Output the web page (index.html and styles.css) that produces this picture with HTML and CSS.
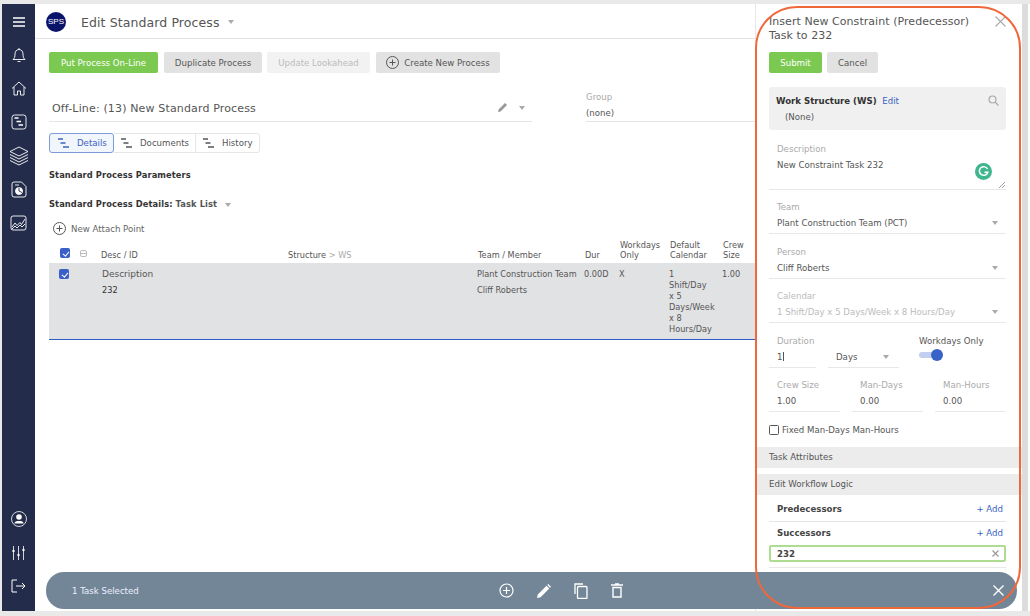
FILE: index.html
```html
<!DOCTYPE html>
<html lang="en">

<head>
    <meta charset="UTF-8">
    <meta name="viewport" content="width=device-width, initial-scale=1.0">
    <title>Edit Standard Process</title>
    <link rel="stylesheet" href="styles.css">
</head>

<body>
    <div class="app">
        <nav class="side">
            <div class="side-group">
                <span class="side-icon"><svg width="14" height="12" viewBox="0 0 14 12"><path d="M1 2h12M1 6h12M1 10h12" stroke="#fff" stroke-width="1.5"/></svg></span>
                <span class="side-icon"><svg width="14" height="16" viewBox="0 0 14 16" fill="none" stroke="#fff" stroke-width=".9"><path d="M1 12.5h12c-1.500-1.500-2-2.500-2-5.500 0-2.500-1.500-4.500-4-4.500S3 4.500 3 7c0 3-.5 4-2 5.500zM7 1v1.500M5.500 14.500h3"/></svg></span>
                <span class="side-icon"><svg width="16" height="15" viewBox="0 0 16 15" fill="none" stroke="#fff" stroke-width=".9"><path d="M1 7.500L8 1l7 6.500M3 6v8h3.500v-4h3v4H13V6"/></svg></span>
                <span class="side-icon"><svg width="16" height="16" viewBox="0 0 16 16" fill="none" stroke="#fff" stroke-width=".9"><rect x="1" y="1" width="14" height="14" rx="2.500"/><path d="M3.500 4h4M5.500 7.500h4.500M7.500 11h4.500" stroke-width="1.300"/></svg></span>
                <span class="side-icon"><svg width="20" height="20" viewBox="0 0 20 20" fill="none" stroke="#fff" stroke-width=".9"><path d="M10 1l9 4.500-9 4.500-9-4.500zM1 8.500l9 4.500 9-4.500M1 11.500l9 4.500 9-4.500M1 14.500l9 4.500 9-4.500"/></svg></span>
                <span class="side-icon"><svg width="16" height="17" viewBox="0 0 16 17" fill="none" stroke="#fff" stroke-width=".9"><path d="M3 1h7.500L15 5.500V14a2 2 0 0 1-2 2H3a2 2 0 0 1-2-2V3a2 2 0 0 1 2-2z"/><path d="M4 4h4"/><circle cx="8" cy="10" r="3.500" fill="#fff"/><path d="M8 10V6.500M8 10l3 1.500" stroke="#232d4b"/></svg></span>
                <span class="side-icon"><svg width="17" height="16" viewBox="0 0 17 16" fill="none" stroke="#fff" stroke-width=".9"><rect x="1" y="1" width="15" height="14" rx="2"/><path d="M2 12l3-4 2 2.500 3-3 1.500 2L15 4"/><path d="M2 14l3-3 2 2 3-3 2 2 3-3"/></svg></span>
            </div>
            <div class="side-group">
                <span class="side-icon"><svg width="16" height="16" viewBox="0 0 16 16"><circle cx="8" cy="8" r="7.500" fill="none" stroke="#fff" stroke-width=".8"/><circle cx="8" cy="6" r="2.800" fill="#fff"/><path d="M3.500 12.500c0-2 2-2.500 4.500-2.500s4.500.5 4.500 2.500z" fill="#fff"/></svg></span>
                <span class="side-icon"><svg width="15" height="14" viewBox="0 0 15 14" stroke="#fff" fill="#fff"><path d="M2.500 0v14M7.500 0v14M12.500 0v14" stroke-width=".8"/><circle cx="2.500" cy="5" r="1.200" stroke="none"/><circle cx="7.500" cy="9" r="1.200" stroke="none"/><circle cx="12.500" cy="4" r="1.200" stroke="none"/></svg></span>
                <span class="side-icon"><svg width="15" height="14" viewBox="0 0 15 14" fill="none" stroke="#fff" stroke-width="1"><path d="M6 1H1v12h5M5 7h9M11 4l3 3-3 3"/></svg></span>
            </div>
        </nav>

        <main class="main">
            <header class="top">
                <span class="logo">SPS</span>
                <h1 class="title">Edit Standard Process</h1>
                <i class="caret"></i>
            </header>

            <div class="content">
                <div class="actions">
                    <button class="btn green wide">Put Process On-Line</button>
                    <button class="btn gray dup">Duplicate Process</button>
                    <button class="btn off look">Update Lookahead</button>
                    <button class="btn gray create">
                        <svg width="13" height="13" viewBox="0 0 13 13" fill="none" stroke="#555"><circle cx="6.500" cy="6.500" r="6"/><path d="M6.500 3.500v6M3.500 6.500h6"/></svg>
                        Create New Process
                    </button>
                </div>

                <div class="proc-row">
                    <div class="proc-name">
                        <span>Off-Line: (13) New Standard Process</span>
                        <svg class="pencil" width="10" height="10" viewBox="0 0 10 10"><path d="M0 10l.6-2.600L7 1l2 2-6.400 6.400z" fill="#999"/></svg>
                        <i class="caret"></i>
                    </div>
                    <div class="group">
                        <label>Group</label>
                        <span>(none)</span>
                    </div>
                </div>

                <div class="tabs">
                    <span class="tab active"><svg class="gantt" width="11" height="10" viewBox="0 0 11 10"><path d="M0 1h5M2.500 5h5M5 9h6" stroke="currentColor" stroke-width="1.500"/></svg>Details</span>
                    <span class="tab doc"><svg class="gantt" width="11" height="10" viewBox="0 0 11 10"><path d="M0 1h5M2.500 5h5M5 9h6" stroke="currentColor" stroke-width="1.500"/></svg>Documents</span>
                    <span class="tab hist"><svg class="gantt" width="11" height="10" viewBox="0 0 11 10"><path d="M0 1h5M2.500 5h5M5 9h6" stroke="currentColor" stroke-width="1.500"/></svg>History</span>
                </div>

                <h2 class="section params">Standard Process Parameters</h2>
                <h2 class="section details">Standard Process Details: <span class="sub">Task List</span> <i class="caret"></i></h2>

                <div class="attach">
                    <svg width="13" height="13" viewBox="0 0 13 13" fill="none" stroke="#555"><circle cx="6.500" cy="6.500" r="6"/><path d="M6.500 3.500v6M3.500 6.500h6"/></svg>
                    New Attach Point
                </div>
            </div>

            <table class="tasks">
                <colgroup>
                    <col class="c-check"><col class="c-tree"><col class="c-desc"><col class="c-struct"><col class="c-team"><col class="c-dur"><col class="c-work"><col class="c-cal"><col class="c-crew">
                </colgroup>
                <thead>
                    <tr>
                        <th><span class="check on"></span></th>
                        <th><span class="minus"></span></th>
                        <th>Desc / ID</th>
                        <th>Structure <span class="light">&gt; WS</span></th>
                        <th>Team / Member</th>
                        <th>Dur</th>
                        <th>Workdays Only</th>
                        <th>Default Calendar</th>
                        <th>Crew Size</th>
                    </tr>
                </thead>
                <tbody>
                    <tr>
                        <td><span class="check on"></span></td>
                        <td></td>
                        <td class="desc-cell"><div class="desc">Description</div><div class="sub-line dark">232</div></td>
                        <td></td>
                        <td><div>Plant Construction Team</div><div class="sub-line">Cliff Roberts</div></td>
                        <td>0.00D</td>
                        <td>X</td>
                        <td class="cal-cell">1 Shift/Day x 5 Days/Week x 8 Hours/Day</td>
                        <td>1.00</td>
                    </tr>
                </tbody>
            </table>
        </main>

        <aside class="panel">
            <h2 class="panel-title">Insert New Constraint (Predecessor) Task to 232</h2>
            <svg class="panel-close" width="11" height="11" viewBox="0 0 11 11"><path d="M.5.5l10 10M10.500.5l-10 10" stroke="#aaa" stroke-width="1.100"/></svg>

            <div class="panel-btns">
                <button class="btn green submit">Submit</button>
                <button class="btn gray cancel">Cancel</button>
            </div>

            <div class="ws">
                <div><b>Work Structure (WS)</b> <a class="link">Edit</a></div>
                <div class="ws-val">(None)</div>
                <svg class="ws-search" width="11" height="11" viewBox="0 0 11 11" fill="none" stroke="#aaa" stroke-width="1.200"><circle cx="4.500" cy="4.500" r="3.500"/><path d="M7 7l3.500 3.500"/></svg>
            </div>

            <div class="field area">
                <label>Description</label>
                <div class="val">New Constraint Task 232</div>
                <span class="grammarly"><svg width="11" height="11" viewBox="0 0 11 11" fill="none" stroke="#fff" stroke-width="1.500"><path d="M9.500 3A4.300 4.300 0 1 0 9.800 6.200H6.500"/></svg></span>
                <svg class="grip" width="6" height="6" viewBox="0 0 6 6"><path d="M0 6l6-6M3 6l3-3" stroke="#888" stroke-width=".8"/></svg>
            </div>

            <div class="field">
                <label>Team</label>
                <div class="val">Plant Construction Team (PCT)<i class="caret"></i></div>
            </div>
            <div class="field">
                <label>Person</label>
                <div class="val">Cliff Roberts<i class="caret"></i></div>
            </div>
            <div class="field disabled">
                <label>Calendar</label>
                <div class="val">1 Shift/Day x 5 Days/Week x 8 Hours/Day<i class="caret"></i></div>
            </div>

            <div class="cols dur-row">
                <div class="field dur">
                    <label>Duration</label>
                    <div class="val">1<span class="cursor"></span></div>
                </div>
                <div class="field unit">
                    <label>&nbsp;</label>
                    <div class="val">Days<i class="caret"></i></div>
                </div>
                <div class="workdays">
                    <span>Workdays Only</span>
                    <span class="toggle"><i></i></span>
                </div>
            </div>

            <div class="cols three">
                <div class="field"><label>Crew Size</label><div class="val">1.00</div></div>
                <div class="field"><label>Man-Days</label><div class="val">0.00</div></div>
                <div class="field"><label>Man-Hours</label><div class="val">0.00</div></div>
            </div>

            <div class="fixed"><span class="check"></span>Fixed Man-Days Man-Hours</div>

            <div class="band first">Task Attributes</div>
            <div class="band">Edit Workflow Logic</div>

            <div class="logic line"><b>Predecessors</b><a class="link">+ Add</a></div>
            <div class="logic"><b>Successors</b><a class="link">+ Add</a></div>
            <div class="tag"><b>232</b><svg width="7" height="7" viewBox="0 0 7 7"><path d="M.5.5l6 6M6.500.5l-6 6" stroke="#999" stroke-width="1.200"/></svg></div>
            <div class="tag-line"></div>
        </aside>

        <div class="scroll"></div>

        <div class="selbar">
            <span class="sel-text">1 Task Selected</span>
            <div class="sel-icons">
                <svg width="15" height="15" viewBox="0 0 15 15" fill="none" stroke="#fff" stroke-width="1.200"><circle cx="7.500" cy="7.500" r="6.500"/><path d="M7.500 4v7M4 7.500h7"/></svg>
                <svg width="14" height="14" viewBox="0 0 14 14"><path d="M0 14l.8-3.600L9.500 1.700l2.800 2.800L3.600 13.200zM10.300 1l1-1L14 2.700l-1 1z" fill="#fff"/></svg>
                <svg width="14" height="16" viewBox="0 0 14 16" fill="none" stroke="#fff" stroke-width="1.300"><path d="M1 11V1h8"/><rect x="3.500" y="3.500" width="9.500" height="12" rx="1"/></svg>
                <svg width="12" height="15" viewBox="0 0 12 15" fill="none" stroke="#fff" stroke-width="1.400"><path d="M4 1h4M0 2h12" stroke-width="1.300"/><path d="M2 4.500h8v9.500H2z"/></svg>
            </div>
            <svg class="sel-close" width="11" height="11" viewBox="0 0 11 11"><path d="M.5.5l10 10M10.500.5l-10 10" stroke="#fff" stroke-width="1.400"/></svg>
        </div>

        <div class="ring"></div>
    </div>
</body>

</html>
```

FILE: styles.css
```css
* {
    margin: 0;
    padding: 0;
    box-sizing: border-box;
}

html,
body {
    height: 100%;
    overflow: hidden;
}

body {
    background-color: #e9e9e9;
    font-family: "DejaVu Sans", Verdana, sans-serif;
    font-size: 8.600px;
    color: #555;
    padding: 4px 0 5px 2px;
}

.app {
    display: flex;
    position: relative;
    height: 607px;
    background-color: #fff;
}

button {
    font-family: inherit;
    border: 0;
}

/* left nav */
.side {
    width: 33px;
    flex: none;
    background-color: #232d4b;
    display: flex;
    flex-direction: column;
    justify-content: space-between;
    padding: 0 0 8px;
}

.side-icon {
    display: flex;
    align-items: center;
    justify-content: center;
    height: 33.5px;
}

.side-group:first-child {
    padding-top: 1px;
}

/* main column */
.main {
    width: 720px;
    flex: none;
}

.top {
    height: 35px;
    border-bottom: 1px solid #e3e3e3;
    display: flex;
    align-items: center;
    padding: 2px 0 0 11px;
}

.logo {
    width: 20px;
    height: 20px;
    border-radius: 50%;
    background-color: #0a1468;
    color: #fff;
    font-family: "Liberation Sans", Arial, sans-serif;
    font-size: 8px;
    line-height: 20px;
    text-align: center;
}

.title {
    font-size: 12.500px;
    font-weight: normal;
    color: #555;
    margin-left: 15px;
    letter-spacing: .1px;
}

.caret {
    display: inline-block;
    width: 0;
    height: 0;
    border-left: 3.500px solid transparent;
    border-right: 3.500px solid transparent;
    border-top: 4px solid #aaa;
}

.top .caret {
    margin-left: 8px;
}

.content {
    padding: 13px 0 0 14px;
}

.actions {
    display: flex;
    height: 21px;
}

.btn {
    height: 21px;
    font-size: 8.600px;
    border-radius: 2px;
    display: inline-flex;
    align-items: center;
    justify-content: center;
    gap: 5px;
}

.green {
    background-color: #7bc950;
    color: #fff;
}

.gray {
    background-color: #e2e2e2;
    color: #555;
}

.off {
    background-color: #f2f2f2;
    color: #bbb;
}

.wide {
    width: 109px;
}

.dup {
    width: 98px;
    margin-left: 6px;
}

.look {
    width: 103px;
    margin-left: 5px;
}

.create {
    width: 124px;
    margin-left: 6px;
}

.proc-row {
    display: flex;
    height: 46px;
    margin-top: 14px;
}

.proc-name {
    width: 483px;
    height: 35px;
    border-bottom: 1px solid #e5e5e5;
    display: flex;
    align-items: flex-end;
    padding: 0 7px 6px 3px;
    font-size: 11px;
    color: #555;
    letter-spacing: .15px;
}

.proc-name span {
    flex: 1;
}

.pencil {
    margin: 0 11px 3px 0;
}

.proc-name .caret {
    margin-bottom: 5px;
}

.group {
    width: 169px;
    height: 35px;
    margin-left: 54px;
    border-bottom: 1px solid #e5e5e5;
    display: flex;
    flex-direction: column;
    gap: 6px;
    padding-top: 5px;
}

.group label {
    color: #aaa;
}

.tabs {
    display: flex;
    height: 20px;
}

.tab {
    display: flex;
    align-items: center;
    gap: 8px;
    padding-left: 7px;
    border: 1px solid #e6e6e6;
    border-left-width: 0;
    color: #555;
}

.tab.doc {
    width: 82px;
}

.tab.hist {
    width: 64px;
}

.tab:last-child {
    border-radius: 0 3px 3px 0;
}

.tab.active {
    color: #3a63c0;
    background-color: #f1f5fc;
    border: 1px solid #7c9bd8;
    border-radius: 3px;
    width: 65px;
    padding-left: 8px;
}

.gantt {
    flex: none;
}

.section {
    font-size: 8.300px;
    line-height: 10px;
    font-weight: bold;
    color: #333;
    letter-spacing: .1px;
}

.params {
    margin-top: 17px;
}

.details {
    margin-top: 19px;
}

.details .sub {
    color: #555;
}

.details .caret {
    margin-left: 5px;
}

.attach {
    display: flex;
    align-items: center;
    gap: 5px;
    margin: 13px 0 0 4px;
    height: 13px;
    color: #666;
}

/* task table */
.tasks {
    width: 706px;
    margin-left: 14px;
    table-layout: fixed;
    border-collapse: collapse;
    font-size: 8.200px;
}

.c-check {
    width: 26px;
}

.c-tree {
    width: 21px;
}

.c-desc {
    width: 187px;
}

.c-struct {
    width: 190px;
}

.c-team {
    width: 107px;
}

.c-dur {
    width: 35px;
}

.c-work {
    width: 50px;
}

.c-cal {
    width: 53px;
}

.c-crew {
    width: 37px;
}

.tasks th {
    font-weight: normal;
    text-align: left;
    vertical-align: bottom;
    line-height: 10px;
    padding: 5px 0 3px 5px;
    color: #555;
}

.tasks td {
    vertical-align: top;
    background-color: #e1e2e4;
    line-height: 11px;
    padding: 6px 0 0 4px;
    height: 76px;
    border-bottom: 1px solid #2f5bc4;
    color: #555;
}

.tasks td.desc-cell {
    padding-left: 6px;
}

.tasks td.cal-cell {
    padding-right: 7px;
}

.light {
    color: #aaa;
}

.check {
    display: inline-block;
    width: 10px;
    height: 10px;
    border: 1px solid #555;
    border-radius: 1.500px;
    background-color: #fff;
    position: relative;
}

.check.on {
    background-color: #3a5fc8;
    border-color: #3a5fc8;
}

.check.on::after {
    content: "";
    position: absolute;
    left: 2.500px;
    top: .5px;
    width: 2.500px;
    height: 5px;
    border: solid #fff;
    border-width: 0 1.300px 1.300px 0;
    transform: rotate(40deg);
}

.tasks th:first-child {
    padding-left: 11px;
}

.tasks td:first-child {
    padding-left: 10px;
}

.minus {
    display: inline-block;
    width: 7px;
    height: 7px;
    border: 1px solid #bbb;
    border-radius: 2px;
    background: linear-gradient(#bbb, #bbb) center / 100% 1px no-repeat;
    margin-bottom: 1px;
}

.desc {
    font-size: 9px;
}

.sub-line {
    margin-top: 5px;
}

.dark {
    color: #333;
}

/* right panel */
.panel {
    width: 267px;
    flex: none;
    border-left: 1px solid #e8e8e8;
    padding: 11px 0 0;
    position: relative;
}

.panel-title {
    font-size: 11px;
    font-weight: normal;
    line-height: 14px;
    color: #555;
    margin: 0 40px 0 13px;
    letter-spacing: .05px;
}

.panel-close {
    position: absolute;
    top: 12px;
    right: 16px;
}

.panel-btns {
    display: flex;
    gap: 5px;
    margin: 9px 0 0 13px;
}

.submit {
    width: 53px;
}

.cancel {
    width: 51px;
}

.ws {
    position: relative;
    margin: 14px 16px 0 13px;
    height: 43px;
    background-color: #f0f0f0;
    border-radius: 3px;
    padding: 9px 7px;
    color: #555;
}

.ws b {
    color: #333;
}

.ws-val {
    margin: 6px 0 0 9px;
}

.ws-search {
    position: absolute;
    top: 8px;
    right: 7px;
}

.link {
    color: #3a63c0;
    margin-left: 3px;
}

.field {
    margin: 0 16px 0 13px;
    height: 32px;
    border-bottom: 1px solid #e8e8e8;
    padding: 0 8px;
    position: relative;
}

.field label {
    display: block;
    color: #aaa;
    line-height: 10px;
}

.field .val {
    margin-top: 6px;
    line-height: 10px;
    color: #555;
    position: relative;
}

.panel > .field {
    margin-top: 12.500px;
}

.panel > .field.area {
    height: 46px;
    margin-top: 14px;
}

.panel > .area + .field {
    margin-top: 12px;
}

.field .caret {
    position: absolute;
    right: 0;
    top: 3px;
}

.disabled label,
.disabled .val {
    color: #bbb;
}

.grammarly {
    position: absolute;
    right: 14.500px;
    top: 18.500px;
    width: 17px;
    height: 17px;
    border-radius: 50%;
    background-color: #3fb68e;
    display: flex;
    align-items: center;
    justify-content: center;
}

.grip {
    position: absolute;
    right: 1px;
    bottom: 1px;
}

.cols {
    display: flex;
    margin: 0 16px 0 13px;
}

.cols .field {
    margin: 0;
}

.dur-row {
    margin-top: 12.500px;
    gap: 12px;
}

.dur {
    width: 47px;
}

.unit {
    width: 71px;
}

.unit .caret {
    right: 2px;
}

.cursor {
    display: inline-block;
    width: 1px;
    height: 9px;
    background-color: #555;
    margin-left: 1px;
    vertical-align: -1px;
}

.workdays {
    display: flex;
    flex-direction: column;
    gap: 3px;
    margin-left: 8px;
}

.toggle {
    display: block;
    width: 24px;
    height: 12px;
    position: relative;
}

.toggle::before {
    content: "";
    position: absolute;
    left: 0;
    top: 3px;
    width: 18px;
    height: 6px;
    border-radius: 3px;
    background-color: #c3cfee;
}

.toggle i {
    position: absolute;
    right: 0;
    top: 0;
    width: 12px;
    height: 12px;
    border-radius: 50%;
    background-color: #3a63c8;
}

.three {
    margin-top: 12.500px;
    gap: 12px;
}

.three .field {
    flex: 1;
}

.fixed {
    display: flex;
    align-items: center;
    gap: 3px;
    margin: 13px 0 0 13px;
    height: 10px;
}

.band {
    height: 21px;
    line-height: 21px;
    background-color: #ececec;
    padding-left: 13px;
    margin-top: 6px;
}

.band.first {
    margin-top: 12px;
}

.logic {
    display: flex;
    justify-content: space-between;
    margin: 0 16px 0 13px;
    padding: 0 3px 0 8px;
    height: 23px;
    line-height: 22px;
}

.logic b {
    color: #444;
}

.logic.line {
    height: 27px;
    line-height: 28px;
    border-bottom: 1px solid #e5e5e5;
}

.tag {
    display: flex;
    align-items: center;
    justify-content: space-between;
    margin: 0 16px 0 13px;
    height: 17px;
    padding: 0 5px 0 6px;
    border: 2px solid #aedd92;
    border-radius: 2px;
    color: #444;
}

.tag-line {
    margin: 5px 16px 0 13px;
    border-top: 1px solid #e8e8e8;
}

.scroll {
    width: 6px;
    background-color: #dcdcdc;
    flex: none;
}

/* overlays */
.selbar {
    position: absolute;
    left: 44px;
    bottom: 2px;
    width: 971px;
    height: 37px;
    background-color: #738698;
    border-radius: 18px;
    color: #eef;
    display: flex;
    align-items: center;
    padding-left: 26px;
}

.sel-text {
    width: 427px;
}

.sel-icons {
    display: flex;
    align-items: center;
    gap: 23px;
}

.sel-close {
    position: absolute;
    right: 13px;
    top: 13px;
}

.ring {
    position: absolute;
    left: 753px;
    top: 2px;
    width: 266px;
    height: 603px;
    border: 2px solid #f0673a;
    border-radius: 42px;
    pointer-events: none;
}
```
